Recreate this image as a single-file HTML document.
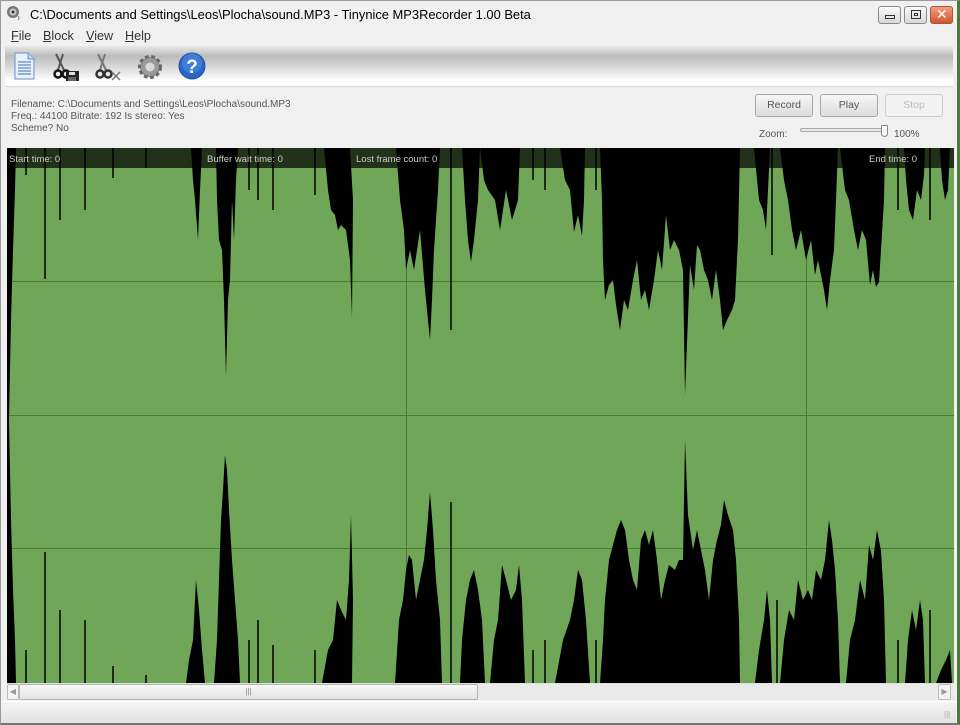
<!DOCTYPE html>
<html><head><meta charset="utf-8"><style>
*{margin:0;padding:0;box-sizing:border-box}
body{width:960px;height:725px;overflow:hidden;background:#f0f0f0;font-family:"Liberation Sans","DejaVu Sans",sans-serif;position:relative}
.a{position:absolute}
.title{left:30px;top:7px;font-size:12.9px;color:#000;white-space:nowrap}
.wb{top:6px;width:23px;height:18px;border:1px solid #8a8a8a;border-radius:3px;background:linear-gradient(#fafafa,#d8d8d8)}
.menu{top:29px;font-size:12.6px;color:#333}
.menu u{text-decoration:underline}
.tb{left:5px;top:46px;width:948px;height:41px;background:linear-gradient(#e8e8e8 0%,#bcbcbc 25%,#d6d6d6 50%,#fdfdfd 85%,#fff 100%);border-bottom:1px solid #d8d8d8}
.info{left:11px;font-size:10px;color:#555;white-space:nowrap}
.btn{top:94px;width:58px;height:23px;border:1px solid #a8a8a8;border-radius:3px;background:linear-gradient(#f6f6f6,#dcdcdc);font-size:10.5px;color:#555;text-align:center;line-height:21px}
.lbl{font-size:10px;color:#555}
</style></head><body>
<div class="a" style="left:0;top:0;width:960px;height:725px;border:1px solid #9a9a9a;border-right:3px solid #4b7a3a;border-bottom:2px solid #777"></div>
<svg class="a" style="left:6px;top:5px" width="16" height="16"><circle cx="7" cy="7" r="6" fill="#777"/><circle cx="7" cy="7" r="3.5" fill="#ccc"/><circle cx="7" cy="7" r="1.5" fill="#333"/><path d="M12 11 q2 2 0 4" stroke="#888" fill="none"/></svg>
<div class="a title">C:\Documents and Settings\Leos\Plocha\sound.MP3 - Tinynice MP3Recorder 1.00 Beta</div>
<div class="a wb" style="left:878px"><div class="a" style="left:6px;top:8px;width:10px;height:4px;border:1px solid #333"></div></div>
<div class="a wb" style="left:904px"><div class="a" style="left:6px;top:3px;width:10px;height:9px;border:1px solid #333"></div><div class="a" style="left:9px;top:6px;width:4px;height:3px;border:1px solid #333"></div></div>
<div class="a wb" style="left:930px;border-color:#a5553a;background:linear-gradient(#f0a080,#d2562e)"><div class="a" style="left:5px;top:-1px;color:#fff;font-weight:bold;font-size:14px">✕</div></div>
<div class="a menu" style="left:11px"><u>F</u>ile</div>
<div class="a menu" style="left:43px"><u>B</u>lock</div>
<div class="a menu" style="left:86px"><u>V</u>iew</div>
<div class="a menu" style="left:125px"><u>H</u>elp</div>
<div class="a tb"></div>
<svg class="a" style="left:0;top:46px" width="220" height="41">
 <path d="M15 7 h13 l6 6 v20 h-19z" fill="#e8f0fb" stroke="#6b8fc8"/>
 <path d="M28 7 v6 h6" fill="#c5d7f2" stroke="#6b8fc8"/>
 <g stroke="#5a86c8" stroke-width="1.2"><line x1="18" y1="16" x2="31" y2="16"/><line x1="18" y1="19" x2="31" y2="19"/><line x1="18" y1="22" x2="31" y2="22"/><line x1="18" y1="25" x2="31" y2="25"/><line x1="18" y1="28" x2="31" y2="28"/></g>
 <g fill="none" stroke="#555" stroke-width="2"><path d="M56 8 l9 18"/><path d="M63 8 l-5 16"/></g>
 <circle cx="58" cy="28" r="3.5" fill="none" stroke="#111" stroke-width="2.5"/><circle cx="66" cy="28" r="3.5" fill="none" stroke="#111" stroke-width="2.5"/>
 <rect x="66" y="25" width="13" height="10" fill="#222"/><rect x="69" y="26" width="6" height="3" fill="#ddd"/><rect x="68" y="31" width="8" height="4" fill="#666"/>
 <g fill="none" stroke="#777" stroke-width="2"><path d="M98 8 l9 18"/><path d="M105 8 l-5 16"/></g>
 <circle cx="100" cy="28" r="3.5" fill="none" stroke="#333" stroke-width="2.5"/><circle cx="108" cy="28" r="3.5" fill="none" stroke="#333" stroke-width="2.5"/>
 <path d="M112 26 l8 8 M120 26 l-8 8" stroke="#777" stroke-width="1.5"/>
 <circle cx="150" cy="21" r="10" fill="#888" stroke="#666" stroke-width="4" stroke-dasharray="3.5 2.5"/><circle cx="150" cy="21" r="9" fill="#9a9a9a"/><circle cx="150" cy="21" r="4.5" fill="#d8d8d8"/>
 <circle cx="192" cy="20" r="13" fill="#2a66c8" stroke="#1d4f9e"/><circle cx="192" cy="17" r="10" fill="#4f8ae0" opacity=".6"/>
 <text x="192" y="27" font-size="19" font-weight="bold" fill="#fff" text-anchor="middle" font-family="Liberation Sans">?</text>
</svg>
<div class="a info" style="top:99px">Filename: C:\Documents and Settings\Leos\Plocha\sound.MP3</div>
<div class="a info" style="top:111px">Freq.: 44100 Bitrate: 192 Is stereo: Yes</div>
<div class="a info" style="top:123px">Scheme? No</div>
<div class="a btn" style="left:755px">Record</div>
<div class="a btn" style="left:820px">Play</div>
<div class="a btn" style="left:885px;color:#bbb;border-color:#ccc;background:#f2f2f2">Stop</div>
<div class="a lbl" style="left:759px;top:129px">Zoom:</div>
<div class="a" style="left:800px;top:128px;width:85px;height:4px;border:1px solid #aaa;border-radius:2px;background:#e8e8e8"></div>
<div class="a" style="left:881px;top:125px;width:7px;height:12px;border:1px solid #888;border-radius:1px 1px 4px 4px;background:#f8f8f8"></div>
<div class="a lbl" style="left:894px;top:129px">100%</div>
<svg class="a" style="left:7px;top:148px" width="947" height="535" viewBox="7 148 947 535">
 <rect x="7" y="148" width="947" height="535" fill="#6fa657"/>
 <g stroke="#4a7a30" stroke-width="1"><line x1="7" y1="281.5" x2="954" y2="281.5"/><line x1="7" y1="415.5" x2="954" y2="415.5"/><line x1="7" y1="548.5" x2="954" y2="548.5"/><line x1="406.5" y1="148" x2="406.5" y2="683"/><line x1="806.5" y1="148" x2="806.5" y2="683"/></g>
 <g fill="#000">
  <polygon points="7,148 16,148 15,190 13,250 11,320 9,420 7,420"/>
  <polygon points="191,148 202,148 200,190 198,240 195,200 193,180"/>
  <polygon points="216,148 238,148 236,180 234,240 232,200 230,280 228,300 226,376 224,300 222,250 219,240 217,200"/>
  <polygon points="324,148 350,148 353,200 352,318 350,260 346,230 341,225 338,230 335,215 331,210 328,190"/>
  <polygon points="396,148 440,148 438,190 434,250 432,300 430,340 428,320 425,290 420,230 414,270 410,250 406,270 404,230 400,200"/>
  <polygon points="462,148 480,148 478,200 474,240 471,262 468,240 465,200"/>
  <polygon points="480,148 520,148 518,200 512,220 506,190 500,230 495,200 488,190 484,180"/>
  <polygon points="560,148 585,148 584,200 582,236 578,215 574,232 570,190 565,180"/>
  <polygon points="600,148 740,148 738,240 735,300 732,310 727,320 723,330 720,300 716,270 712,300 708,280 704,270 700,250 697,245 694,290 690,265 685,395 683,270 679,250 674,240 670,250 666,215 662,270 658,250 654,280 649,310 645,290 641,300 637,260 633,280 628,310 624,300 620,330 616,305 613,280 609,285 605,300 603,260 602,200"/>
  <polygon points="754,148 770,148 768,190 766,230 763,210 759,200"/>
  <polygon points="780,148 838,148 836,200 834,250 830,280 827,310 824,290 818,260 815,275 811,240 806,260 801,230 796,250 792,230 788,200 784,180"/>
  <polygon points="840,148 885,148 884,200 881,250 879,282 876,287 873,270 870,285 866,240 862,230 858,250 854,230 849,200 845,190"/>
  <polygon points="904,148 925,148 924,175 921,200 917,190 913,220 909,210 906,180"/>
  <polygon points="940,148 950,148 948,190 945,200 942,180"/>
  <polygon points="7,683 16,683 15,640 13,590 11,520 9,420 7,420"/>
  <polygon points="186,683 205,683 202,650 199,610 196,580 193,640 189,660"/>
  <polygon points="214,683 240,683 238,640 235,600 232,560 229,510 227,470 225,455 223,490 221,520 219,580 217,640"/>
  <polygon points="322,683 352,683 353,600 351,515 349,580 346,620 341,610 337,600 333,640 328,650"/>
  <polygon points="395,683 442,683 440,620 436,580 433,530 430,492 427,530 424,560 420,580 416,600 412,560 409,555 406,570 403,600 399,620"/>
  <polygon points="460,683 485,683 482,620 478,590 474,570 470,580 466,600 462,640"/>
  <polygon points="490,683 525,683 522,600 519,565 516,590 511,600 506,580 502,565 498,620 494,640"/>
  <polygon points="555,683 590,683 586,620 582,580 578,570 574,600 570,620 563,640"/>
  <polygon points="600,683 740,683 739,620 736,560 733,530 728,515 724,500 721,525 717,540 713,560 709,600 705,570 701,550 697,530 693,550 688,515 685,440 683,560 679,560 675,570 669,565 665,580 661,600 657,560 653,530 649,545 645,530 641,540 637,590 633,580 629,560 625,530 621,520 617,530 613,545 609,560 605,600 603,640"/>
  <polygon points="755,683 772,683 770,620 767,590 764,620 759,650"/>
  <polygon points="780,683 840,683 838,620 835,570 832,540 829,520 825,560 821,580 816,570 812,600 808,590 803,600 798,580 794,620 789,610 784,640"/>
  <polygon points="846,683 886,683 884,600 881,551 877,530 873,560 869,545 865,600 860,580 855,620 850,640"/>
  <polygon points="905,683 925,683 923,620 920,600 916,630 912,610 908,640"/>
  <polygon points="936,683 952,683 950,650 946,660 941,670"/>
 </g>
 <g stroke="#000" stroke-width="1.5">
  <line x1="45" y1="148" x2="45" y2="279"/><line x1="60" y1="148" x2="60" y2="220"/><line x1="85" y1="148" x2="85" y2="210"/><line x1="26" y1="148" x2="26" y2="175"/><line x1="113" y1="148" x2="113" y2="178"/><line x1="146" y1="148" x2="146" y2="168"/>
  <line x1="249" y1="148" x2="249" y2="190"/><line x1="258" y1="148" x2="258" y2="200"/><line x1="273" y1="148" x2="273" y2="210"/><line x1="315" y1="148" x2="315" y2="195"/><line x1="451" y1="148" x2="451" y2="330"/><line x1="533" y1="148" x2="533" y2="180"/><line x1="545" y1="148" x2="545" y2="190"/><line x1="596" y1="148" x2="596" y2="190"/><line x1="772" y1="148" x2="772" y2="255"/><line x1="898" y1="148" x2="898" y2="210"/><line x1="930" y1="148" x2="930" y2="220"/>
  <line x1="45" y1="683" x2="45" y2="552"/><line x1="60" y1="683" x2="60" y2="610"/><line x1="85" y1="683" x2="85" y2="620"/><line x1="26" y1="683" x2="26" y2="650"/><line x1="113" y1="683" x2="113" y2="666"/><line x1="146" y1="683" x2="146" y2="675"/>
  <line x1="249" y1="683" x2="249" y2="640"/><line x1="258" y1="683" x2="258" y2="620"/><line x1="273" y1="683" x2="273" y2="645"/><line x1="315" y1="683" x2="315" y2="650"/><line x1="451" y1="683" x2="451" y2="502"/><line x1="533" y1="683" x2="533" y2="650"/><line x1="545" y1="683" x2="545" y2="640"/><line x1="596" y1="683" x2="596" y2="640"/><line x1="777" y1="683" x2="777" y2="600"/><line x1="898" y1="683" x2="898" y2="640"/><line x1="930" y1="683" x2="930" y2="610"/>
 </g>
 <rect x="7" y="148" width="947" height="20" fill="#000" opacity=".7"/>
 <g font-size="9.5" fill="#c8d0c0" font-family="Liberation Sans"><text x="9" y="162">Start time: 0</text><text x="207" y="162">Buffer wait time: 0</text><text x="356" y="162">Lost frame count: 0</text><text x="869" y="162">End time: 0</text></g>
</svg>
<div class="a" style="left:7px;top:683px;width:947px;height:17px;background:#eaeaea;border-top:1px solid #ddd"></div>
<div class="a" style="left:7px;top:684px;width:12px;height:16px;border:1px solid #bbb;border-radius:2px;background:#f3f3f3;font-size:8px;color:#999;line-height:14px;text-align:center">◀</div>
<div class="a" style="left:19px;top:684px;width:459px;height:16px;border:1px solid #b5b5b5;border-radius:2px;background:linear-gradient(#f8f8f8,#e4e4e4);font-size:8px;color:#888;text-align:center;line-height:14px">|||</div>
<div class="a" style="left:938px;top:684px;width:13px;height:16px;border:1px solid #bbb;border-radius:2px;background:#f3f3f3;font-size:8px;color:#999;line-height:14px;text-align:center">▶</div>
<div class="a" style="left:1px;top:701px;width:955px;height:22px;background:linear-gradient(#f4f4f4,#e2e2e2);border-top:1px solid #fff"></div>
<div class="a" style="left:944px;top:710px;font-size:8px;color:#aaa">|||</div>
</body></html>
